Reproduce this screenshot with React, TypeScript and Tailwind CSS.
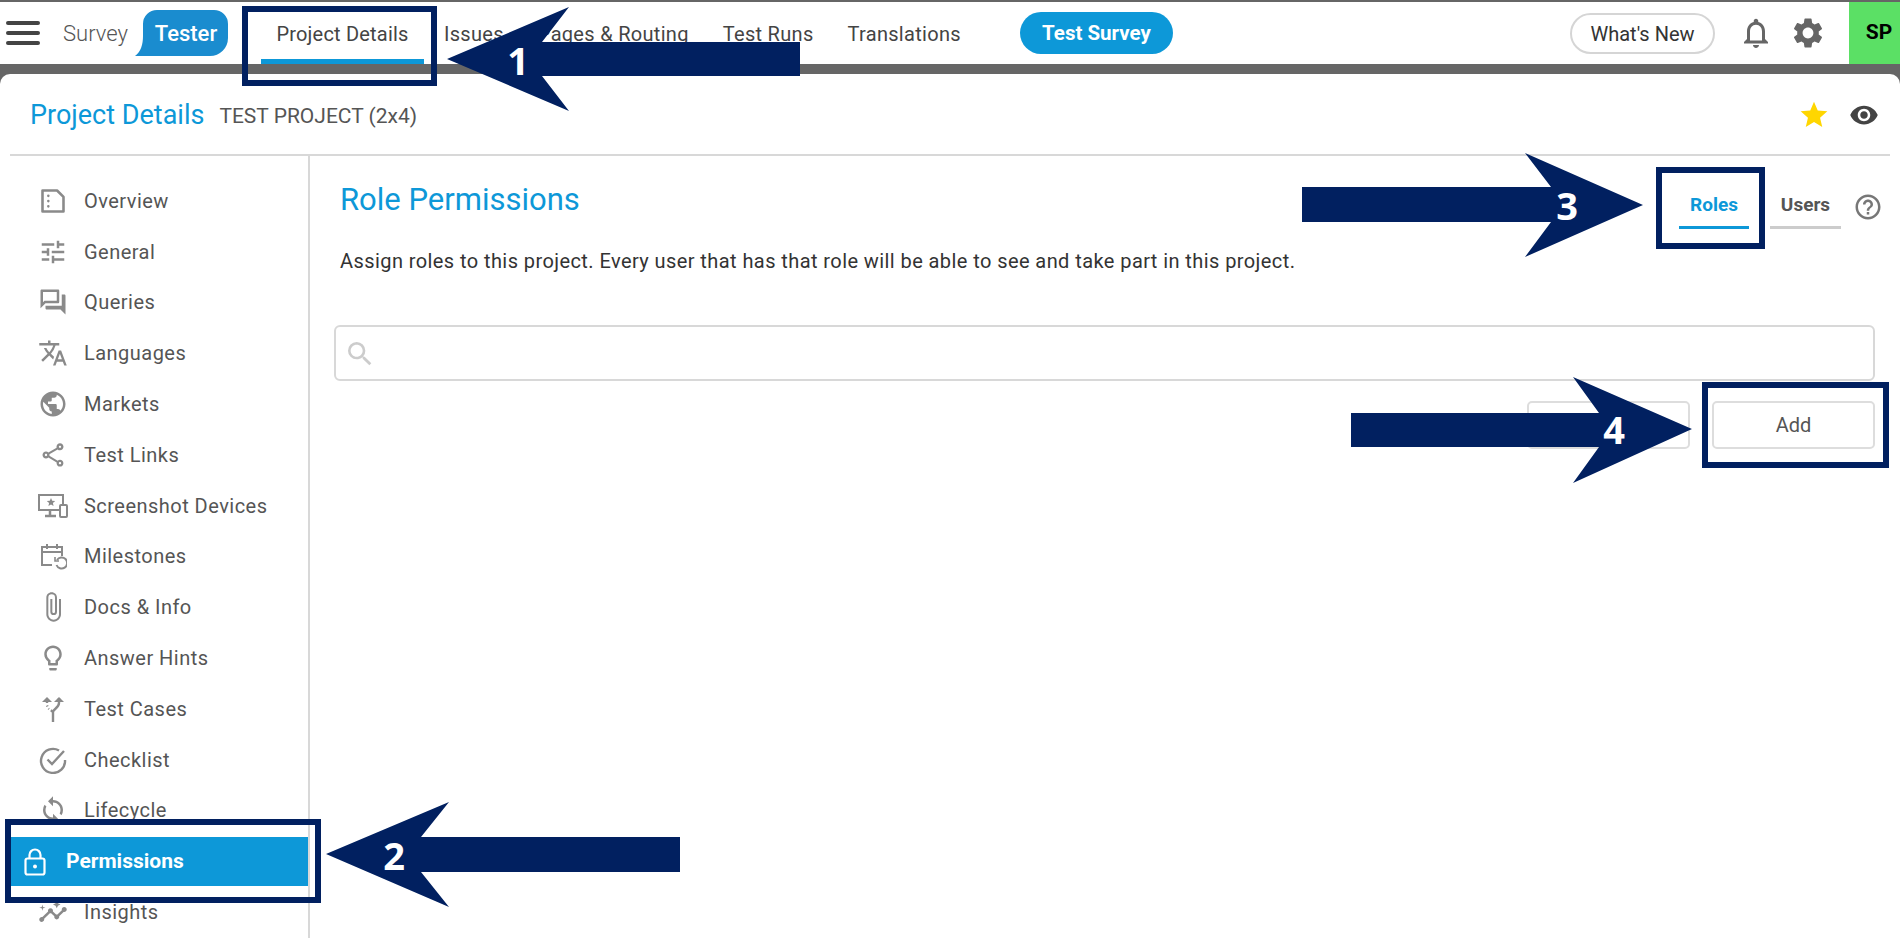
import { MdOutlineTune, MdOutlineForum, MdTranslate, MdPublic, MdOutlineShare, MdAttachFile, MdOutlineLightbulb, MdSync, MdOutlineInsights, MdStar, MdVisibility, MdOutlineNotifications, MdSettings, MdHelpOutline, MdSearch } from "react-icons/md";
import type { ReactNode } from "react";

const OverviewIcon = () => (
  <svg viewBox="0 0 24 24" className="w-[28px] h-[28px]" fill="none" stroke="#8a8a8a" strokeWidth="2.2">
    <path d="M3 3h12.5l5.5 5.5V21H3z" strokeLinejoin="round" />
    <path d="M8 7.5v.1M8 12v.1M8 16.5v.1" strokeLinecap="round" />
  </svg>
);

const DevicesIcon = () => (
  <svg viewBox="0 0 32 26" className="w-[32px] h-[26px]" fill="none" stroke="#8a8a8a" strokeWidth="2">
    <path d="M22 17H2V2h24v9" />
    <path d="M13 18v4M8 23h11" strokeWidth="2.5" />
    <path d="M14 5l1.2 2.8 3 .2-2.3 2 .7 3-2.6-1.6-2.6 1.6.7-3-2.3-2 3-.2z" fill="#8a8a8a" stroke="none" />
    <rect x="23" y="12" width="7" height="12" rx="1" />
  </svg>
);

const MilestonesIcon = () => (
  <svg viewBox="0 0 28 28" className="w-[28px] h-[28px]" fill="none" stroke="#8a8a8a" strokeWidth="2">
    <path d="M13 23H3V5h20v9" />
    <path d="M3 10h20M8 2v5M18 2v5" />
    <path d="M18 18a5.5 5.5 0 1 1-.5 5" />
    <path d="M16 15v4h4" strokeWidth="1.6" />
  </svg>
);

const TestCasesIcon = () => (
  <svg viewBox="0 0 26 28" className="w-[26px] h-[28px]" fill="none" stroke="#8a8a8a" strokeWidth="2.4">
    <path d="M13 27V17c0-3 6-4 6-9V3" />
    <path d="M14 7l5-5 5 5" fill="#8a8a8a" strokeWidth="0" />
    <path d="M13 17c-1-1-3-2-4.500-3.500M7.500 11.500l-.5-1M7 8V5" strokeDasharray="3 2" />
    <path d="M2 7l5-5 5 5" fill="#8a8a8a" strokeWidth="0" />
  </svg>
);

const ChecklistIcon = () => (
  <svg viewBox="0 0 28 28" className="w-[28px] h-[28px]" fill="none" stroke="#8a8a8a" strokeWidth="2.4">
    <path d="M20 4.500A12 12 0 1 0 26 14" />
    <path d="M8.500 13.500l4.500 4.500L25 5" />
  </svg>
);

const LockIcon = () => (
  <svg viewBox="0 0 22 28" className="w-[22px] h-[28px]" fill="none" stroke="#ffffff" strokeWidth="2.2">
    <rect x="1.500" y="10.500" width="19" height="16" rx="2" />
    <path d="M5.500 10.500V7a5.500 5.500 0 0 1 11 0v3.500" />
    <circle cx="11" cy="18.500" r="2" fill="#ffffff" stroke="none" />
  </svg>
);

const navItems = ["Issues", "Pages & Routing", "Test Runs", "Translations"];

const sideItems: { label: string; icon: ReactNode }[] = [
  { label: "Overview", icon: <OverviewIcon /> },
  { label: "General", icon: <MdOutlineTune size={30} color="#8a8a8a" /> },
  { label: "Queries", icon: <MdOutlineForum size={30} color="#8a8a8a" /> },
  { label: "Languages", icon: <MdTranslate size={30} color="#8a8a8a" /> },
  { label: "Markets", icon: <MdPublic size={30} color="#8a8a8a" /> },
  { label: "Test Links", icon: <MdOutlineShare size={28} color="#8a8a8a" /> },
  { label: "Screenshot Devices", icon: <DevicesIcon /> },
  { label: "Milestones", icon: <MilestonesIcon /> },
  { label: "Docs & Info", icon: <MdAttachFile size={32} color="#8a8a8a" /> },
  { label: "Answer Hints", icon: <MdOutlineLightbulb size={30} color="#8a8a8a" /> },
  { label: "Test Cases", icon: <TestCasesIcon /> },
  { label: "Checklist", icon: <ChecklistIcon /> },
  { label: "Lifecycle", icon: <MdSync size={30} color="#8a8a8a" /> },
  { label: "Permissions", icon: <LockIcon /> },
  { label: "Insights", icon: <MdOutlineInsights size={30} color="#8a8a8a" /> },
];

const Callout = ({ className }: { className: string }) => (
  <div className={`absolute border-[6px] border-[#012060] ${className}`} />
);

const Step = ({ n, className }: { n: string; className: string }) => (
  <span className={`absolute text-[38px] leading-none font-bold text-white font-['Open_Sans',sans-serif] -translate-x-1/2 -translate-y-1/2 ${className}`}>
    {n}
  </span>
);

const App = () => {
  return (
    <div className="relative w-[1900px] h-[938px] overflow-hidden bg-[#666666] pt-[2px] font-['Roboto',sans-serif]">
      <header className="flex items-center h-[62px] bg-white">
        <div className="flex flex-col gap-[6px] ml-[6px] w-[34px] shrink-0">
          <span className="h-[4px] rounded-full bg-[#444444]" />
          <span className="h-[4px] rounded-full bg-[#444444]" />
          <span className="h-[4px] rounded-full bg-[#444444]" />
        </div>
        <span className="ml-[23px] w-[66px] text-[22px] font-light text-[#555555]">Survey</span>
        <div className="relative flex ml-[6px] w-[93px] h-[46px] items-center justify-center pl-[9px] text-white text-[22px] font-medium">
          <svg className="absolute inset-0" width="93" height="46" viewBox="0 0 93 46">
            <path fill="#1a8ccf" d="M22 0H79a14 14 0 0 1 14 14V28a18 18 0 0 1-18 18H0C6 42 8 34 8 26V14A14 14 0 0 1 22 0Z" />
          </svg>
          <span className="relative">Tester</span>
        </div>
        <nav className="flex items-center ml-[33px] h-full">
          <div className="flex items-center justify-center w-[163px] h-full border-b-[5px] border-[#0d98d8] pt-[7px] text-[20px] tracking-[0.2px] text-[#444444]">
            Project Details
          </div>
          <div className="flex items-center gap-[34px] ml-[20px] pt-[2px] text-[20px] tracking-[0.3px] text-[#444444]">
            {navItems.map((item) => (
              <span key={item}>{item}</span>
            ))}
          </div>
        </nav>
        <button className="ml-[59px] w-[153px] h-[42px] rounded-full bg-[#0d98d8] pt-[1px] text-white text-[20.5px] font-bold">
          Test Survey
        </button>
        <button className="ml-auto w-[145px] h-[41px] rounded-full border-2 border-[#d5d5d5] pt-[1px] text-[20px] text-[#333333]">
          What's New
        </button>
        <MdOutlineNotifications size={36} color="#666666" className="ml-[23px]" />
        <MdSettings size={36} color="#666666" className="ml-[16px]" />
        <div className="flex items-center justify-center ml-[23px] w-[51px] h-full bg-[#5be065] pl-[9px] text-[21px] font-bold text-black">
          SP
        </div>
      </header>
      <div className="h-[10px]" />

      <main className="h-[864px] rounded-t-[10px] bg-white">
        <div className="flex items-center h-[82px] mx-[10px] border-b-2 border-[#d8d8d8]">
          <h1 className="ml-[20px] mt-[3px] text-[27px] text-[#0d98d8]">Project Details</h1>
          <span className="ml-[15px] mt-[5px] text-[21px] text-[#555555]">TEST PROJECT (2x4)</span>
          <MdStar size={32} color="#ffd600" className="ml-auto mt-[1px]" />
          <MdVisibility size={30} color="#444444" className="ml-[19px] mr-[11px] mt-[1px]" />
        </div>

        <div className="flex h-[782px]">
          <aside className="w-[310px] shrink-0 border-r-2 border-[#d8d8d8] pt-[19px] pl-[11px]">
            {sideItems.map((item) =>
              item.label === "Permissions" ? (
                <div key={item.label} className="flex items-center h-[49px] mt-[2px] bg-[#0d98d8] text-white font-bold text-[21px]">
                  <span className="flex justify-center w-[48px]">{item.icon}</span>
                  <span className="ml-[7px]">{item.label}</span>
                </div>
              ) : (
                <div key={item.label} className="flex items-center h-[50.8px] pt-[1px] text-[20px] tracking-[0.47px] text-[#555555]">
                  <span className="flex justify-center w-[32px] ml-[26px] shrink-0">{item.icon}</span>
                  <span className="ml-[15px]">{item.label}</span>
                </div>
              )
            )}
          </aside>

          <section className="flex-1 pl-[24px] pr-[25px]">
            <div className="flex items-start pt-[19px] pl-[6px] h-[93px]">
              <h2 className="text-[31px] leading-[50px] text-[#0d98d8]">Role Permissions</h2>
              <div className="flex ml-auto items-center -mt-[1px]">
                <div className="w-[70px] h-[50px] mr-[21px] mt-[5px] border-b-[3px] border-[#0d98d8] text-center leading-[52px] text-[19px] font-bold text-[#0d98d8]">
                  Roles
                </div>
                <div className="w-[71px] h-[50px] mt-[5px] border-b-[3px] border-[#cccccc] text-center leading-[52px] text-[19px] font-bold text-[#555555]">
                  Users
                </div>
                <MdHelpOutline size={30} color="#777777" className="ml-[12px] mr-[-8px] mt-[10px]" />
              </div>
            </div>
            <p className="pl-[6px] text-[20px] leading-[24px] tracking-[0.42px] text-[#333333]">
              Assign roles to this project. Every user that has that role will be able to see and take part in this project.
            </p>
            <div className="flex items-center h-[56px] mt-[52px] pl-[8px] pt-[2px] rounded-[6px] border-2 border-[#d8d8d8]">
              <MdSearch size={32} color="#cccccc" />
            </div>
            <div className="flex justify-end gap-[22px] mt-[20px]">
              <button className="w-[163px] h-[48px] rounded-[5px] border-2 border-[#dddddd]" />
              <button className="w-[163px] h-[48px] rounded-[5px] border-2 border-[#dddddd] text-[20px] text-[#555555]">Add</button>
            </div>
          </section>
        </div>
      </main>

      {/* tutorial annotations on top of the screenshot */}
      <svg className="absolute inset-0 w-[1900px] h-[938px]" viewBox="0 0 1900 938">
        <polygon fill="#012060" points="447,59 569,7 542,42 800,42 800,76 542,76 569,111" />
        <polygon fill="#012060" points="326,854 449,802 421,837 680,837 680,872 421,872 449,907" />
        <polygon fill="#012060" points="1643,205 1525,153 1551,187 1302,187 1302,222 1551,222 1525,257" />
        <polygon fill="#012060" points="1692,429 1573,377 1599,413 1351,413 1351,447 1599,447 1573,483" />
      </svg>
      <Callout className="left-[242px] top-[6px] w-[195px] h-[80px]" />
      <Callout className="left-[5px] top-[819px] w-[316px] h-[84px]" />
      <Callout className="left-[1656px] top-[167px] w-[109px] h-[82px]" />
      <Callout className="left-[1702px] top-[382px] w-[187px] h-[86px]" />
      <Step n="1" className="left-[518px] top-[60px]" />
      <Step n="2" className="left-[394px] top-[855px]" />
      <Step n="3" className="left-[1567px] top-[205px]" />
      <Step n="4" className="left-[1614px] top-[429px]" />
    </div>
  );
};

export default App;
